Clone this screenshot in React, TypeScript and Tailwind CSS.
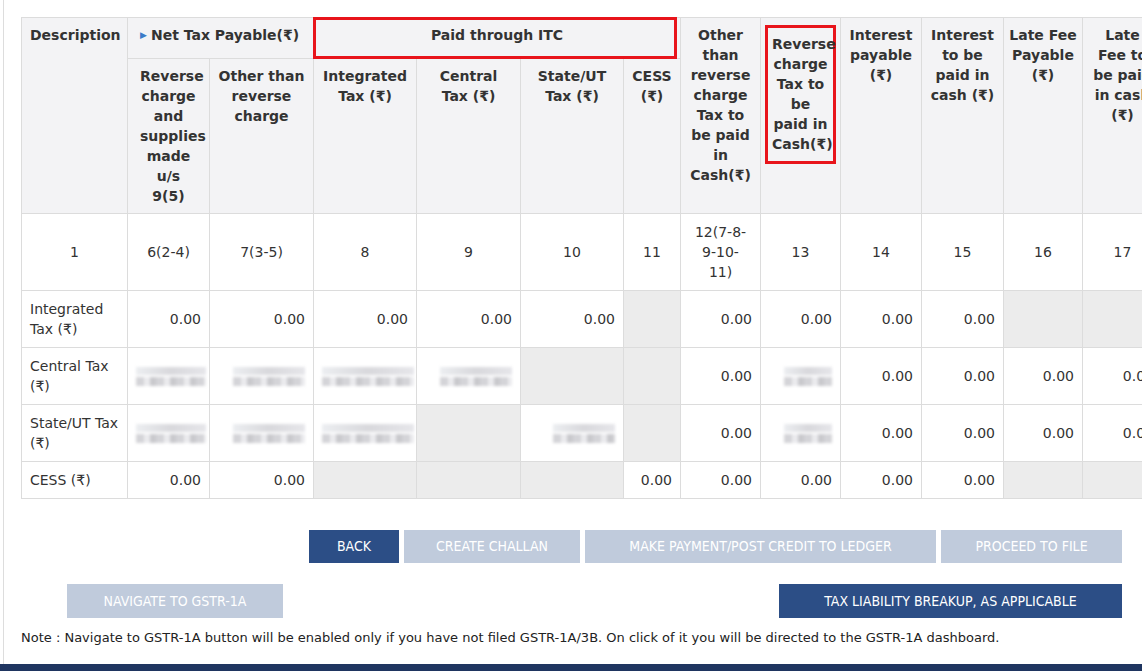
import React from "react";

const widths = [106, 82, 104, 103, 104, 103, 57, 80, 80, 81, 82, 79, 80];

function Blur({ w = "w-[70px]", two = true }: { w?: string; two?: boolean }) {
  return (
    <div className={`ml-auto ${w} flex flex-col gap-[2px] blur-[1.5px]`}>
      {two && <div className="h-[8px] bg-gradient-to-r from-[#eceef1] via-[#d8d8dc] to-[#e6e6ea]" />}
      <div className="h-[9px] bg-[repeating-linear-gradient(90deg,#d4d4d8_0px,#d4d4d8_8px,#ebebee_8px,#ebebee_14px,#c9c9cd_14px,#c9c9cd_20px)]" />
    </div>
  );
}

const H = "border border-[#dcdcdc] bg-[#f3f3f5] align-top text-center font-bold px-1 pt-[7px] leading-[20px]";
const C = "border border-[#dcdcdc] px-2 text-right";
const G = "border border-[#dcdcdc] bg-[#ececec]";
const BTN = "uppercase text-[14px]";

export default function App() {
  const n = (v: string) => <td className={C}>{v}</td>;
  const g = () => <td className={G} />;
  const b = (w?: string) => (
    <td className={C}>
      <Blur w={w} />
    </td>
  );
  return (
    <div className="h-[671px] w-[1142px] overflow-hidden bg-white flex flex-col text-[#333]" style={{ fontFamily: "Tahoma, 'DejaVu Sans', sans-serif" }}>
      <div className="flex-1 ml-[3px] border-l border-[#ddd] pl-[17px] pt-[17px]">
        <div className="relative overflow-hidden w-[1122px]">
          <table className="table-fixed border-collapse text-[14px] w-[1141px]">
            <colgroup>
              {widths.map((w, i) => (
                <col key={i} style={{ width: w }} />
              ))}
            </colgroup>
            <thead>
              <tr className="h-[41px]">
                <th rowSpan={2} className={H + " text-left px-2"}>Description</th>
                <th colSpan={2} className={H + " text-left pl-3"}>
                  <span className="text-[#3a7bc8] text-[9px] mr-1 align-[2px]">▶</span>Net Tax Payable(₹)
                </th>
                <th colSpan={4} className={H + " relative"}>
                  <div className="absolute left-[-1px] right-[3px] top-[-1px] bottom-[-1px] border-[3px] border-[#e8141b]" />
                  Paid through ITC
                </th>
                <th rowSpan={2} className={H}>Other than reverse charge Tax to be paid in Cash(₹)</th>
                <th rowSpan={2} className={H + " pt-0 px-0"}>
                  <div className="border-[3px] border-[#e8141b] mx-0 h-[139px] px-[4px] pt-[6px]">Reverse charge Tax to be paid in Cash(₹)</div>
                </th>
                <th rowSpan={2} className={H}>Interest payable (₹)</th>
                <th rowSpan={2} className={H}>Interest to be paid in cash (₹)</th>
                <th rowSpan={2} className={H}>Late Fee Payable (₹)</th>
                <th rowSpan={2} className={H + " px-[10px]"}>Late Fee to be paid in cash (₹)</th>
                <th rowSpan={2} className={H} />
              </tr>
              <tr className="h-[155px]">
                <th className={H + " px-3 pt-[5px]"}>Reverse charge and supplies made u/s 9(5)</th>
                <th className={H + " pt-[5px]"}>Other than reverse charge</th>
                <th className={H + " pt-[5px]"}>Integrated Tax (₹)</th>
                <th className={H + " pt-[5px] px-3"}>Central Tax (₹)</th>
                <th className={H + " pt-[5px]"}>State/UT Tax (₹)</th>
                <th className={H + " pt-[5px]"}>CESS (₹)</th>
              </tr>
            </thead>
            <tbody>
              <tr className="h-[77px] text-center">
                {["1", "6(2-4)", "7(3-5)", "8", "9", "10", "11", "12(7-8-9-10-11)", "13", "14", "15", "16", "17"].map((t, i) => (
                  <td key={i} className="border border-[#dcdcdc] px-3 leading-[20px]">{t}</td>
                ))}
              </tr>
              <tr className="h-[57px]">
                <td className="border border-[#dcdcdc] px-2 leading-[20px]">Integrated Tax (₹)</td>
                {n("0.00")}{n("0.00")}{n("0.00")}{n("0.00")}{n("0.00")}{g()}{n("0.00")}{n("0.00")}{n("0.00")}{n("0.00")}{g()}{g()}{g()}
              </tr>
              <tr className="h-[57px]">
                <td className="border border-[#dcdcdc] px-2 leading-[20px]">Central Tax (₹)</td>
                {b()}{b("w-[72px]")}{b("w-[92px]")}{b("w-[72px]")}{g()}{g()}{n("0.00")}{b("w-[48px]")}{n("0.00")}{n("0.00")}{n("0.00")}{n("0.00")}{g()}
              </tr>
              <tr className="h-[57px]">
                <td className="border border-[#dcdcdc] px-2 leading-[20px]">State/UT Tax (₹)</td>
                {b()}{b("w-[72px]")}{b("w-[92px]")}{g()}{b("w-[62px]")}{g()}{n("0.00")}{b("w-[48px]")}{n("0.00")}{n("0.00")}{n("0.00")}{n("0.00")}{g()}
              </tr>
              <tr className="h-[37px]">
                <td className="border border-[#dcdcdc] px-2">CESS (₹)</td>
                {n("0.00")}{n("0.00")}{g()}{g()}{g()}{n("0.00")}{n("0.00")}{n("0.00")}{n("0.00")}{n("0.00")}{g()}{g()}{g()}
              </tr>
            </tbody>
          </table>
        </div>
        <div className="w-[1101px] mt-[31px] flex justify-end gap-[5px] text-white" style={{ fontFamily: "'DejaVu Sans Condensed', 'Liberation Sans', sans-serif" }}>
          <button className={BTN + " h-[33px] w-[90px] bg-[#2c4e86]"}>Back</button>
          <button className={BTN + " h-[33px] w-[176px] bg-[#c0cbdc]"}>Create Challan</button>
          <button className={BTN + " h-[33px] w-[351px] bg-[#c0cbdc]"}>Make Payment/Post Credit to Ledger</button>
          <button className={BTN + " h-[33px] w-[181px] bg-[#c0cbdc]"}>Proceed to File</button>
        </div>
        <div className="w-[1101px] mt-[21px] flex justify-between text-white" style={{ fontFamily: "'DejaVu Sans Condensed', 'Liberation Sans', sans-serif" }}>
          <button className={BTN + " ml-[46px] h-[34px] w-[216px] bg-[#c0cbdc]"}>Navigate to GSTR-1A</button>
          <button className={BTN + " h-[34px] w-[343px] bg-[#2c4e86]"}>Tax Liability Breakup, as applicable</button>
        </div>
        <p className="mt-[10px] text-[13px] text-[#222]">
          Note : Navigate to GSTR-1A button will be enabled only if you have not filed GSTR-1A/3B. On click of it you will be directed to the GSTR-1A dashboard.
        </p>
      </div>
      <div className="h-[7px] bg-[#1f3560]" />
    </div>
  );
}
